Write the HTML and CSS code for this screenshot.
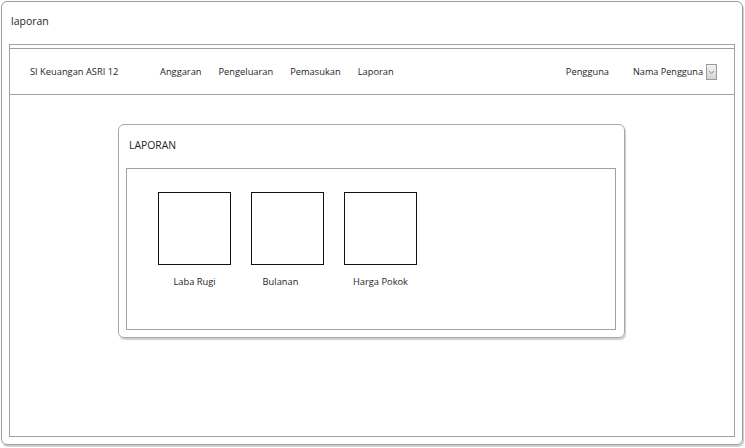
FILE: index.html
```html
<!DOCTYPE html>
<html>
<head>
<meta charset="utf-8">
<title>laporan</title>
<link rel="stylesheet" href="styles.css">
</head>
<body>
<div class="window">
  <div class="window-title">laporan</div>
  <div class="frame">
    <nav class="navbar">
      <span class="brand">SI Keuangan ASRI 12</span>
      <ul class="menu">
        <li>Anggaran</li>
        <li>Pengeluaran</li>
        <li>Pemasukan</li>
        <li>Laporan</li>
      </ul>
      <div class="user">
        <span class="user-label">Pengguna</span>
        <span class="user-name">Nama Pengguna</span>
        <span class="dropdown">
          <svg width="7" height="5" viewBox="0 0 7 5"><path d="M1 1 L3.5 3.5 L6 1" fill="none" stroke="#8a8a8a" stroke-width="1"/></svg>
        </span>
      </div>
    </nav>
    <section class="card">
      <h1 class="card-title">LAPORAN</h1>
      <div class="card-body">
        <div class="tile">
          <div class="tile-box"></div>
          <div class="tile-label">Laba Rugi</div>
        </div>
        <div class="tile tile-shift">
          <div class="tile-box"></div>
          <div class="tile-label">Bulanan</div>
        </div>
        <div class="tile">
          <div class="tile-box"></div>
          <div class="tile-label">Harga Pokok</div>
        </div>
      </div>
    </section>
  </div>
</div>
</body>
</html>
```
FILE: styles.css
```css
* { box-sizing: border-box; }
html, body { margin: 0; padding: 0; background: #fff; }
body {
  font-family: "Open Sans", "Noto Sans", sans-serif;
  color: #1e1e1e;
  width: 745px;
  height: 448px;
  overflow: hidden;
}
.window {
  margin: 1px 0 0 1px;
  width: 742px;
  height: 444px;
  border: 1px solid #9c9c9c;
  border-radius: 6px;
  box-shadow: 1px 2px 0 #d0d0d0;
  padding: 0 7px 0 7px;
  display: flex;
  flex-direction: column;
}
.window-title {
  height: 42px;
  padding: 12px 0 0 2px;
  font-size: 10.5px;
  line-height: 14px;
}
.frame {
  width: 726px;
  height: 393px;
  border: 1px solid #a0a0a0;
  padding-top: 3px;
}
.navbar {
  height: 47px;
  border-top: 1px solid #a0a0a0;
  border-bottom: 1px solid #a0a0a0;
  display: flex;
  align-items: center;
  padding: 0 17px 0 20px;
  font-size: 9.3px;
  line-height: 13px;
}
.brand { width: 130px; }
.menu {
  list-style: none;
  margin: 0;
  padding: 0;
  display: flex;
  gap: 17px;
}
.user {
  margin-left: auto;
  display: flex;
  align-items: center;
}
.user-label { margin-right: 24px; }
.user-name { margin-right: 3px; font-size: 9.1px; }
.dropdown {
  width: 11px;
  height: 16px;
  border: 1px solid #9a9a9a;
  background: linear-gradient(#f2f2f2, #d4d4d4);
  display: flex;
  align-items: center;
  justify-content: center;
  margin-top: 1px;
}
.card {
  margin: 29px 0 0 108px;
  width: 507px;
  height: 214px;
  border: 1px solid #a8a8a8;
  border-radius: 6px;
  box-shadow: 1px 2px 1px #cfcfcf;
  padding: 13px 8px 7px 7px;
}
.card-title {
  margin: 0 0 16px 3px;
  font-size: 10.4px;
  line-height: 14px;
  font-weight: normal;
}
.card-body {
  width: 490px;
  height: 162px;
  border: 1px solid #a0a0a0;
  padding: 23px 0 0 31px;
  display: flex;
  gap: 20px;
  align-items: flex-start;
}
.tile {
  width: 73px;
  display: flex;
  flex-direction: column;
  align-items: center;
}
.tile-box {
  width: 73px;
  height: 73px;
  border: 1px solid #111;
}
.tile-label {
  margin-top: 10px;
  font-size: 9.3px;
  line-height: 14px;
  white-space: nowrap;
}
.tile-shift .tile-label { margin-right: 14px; }
```
